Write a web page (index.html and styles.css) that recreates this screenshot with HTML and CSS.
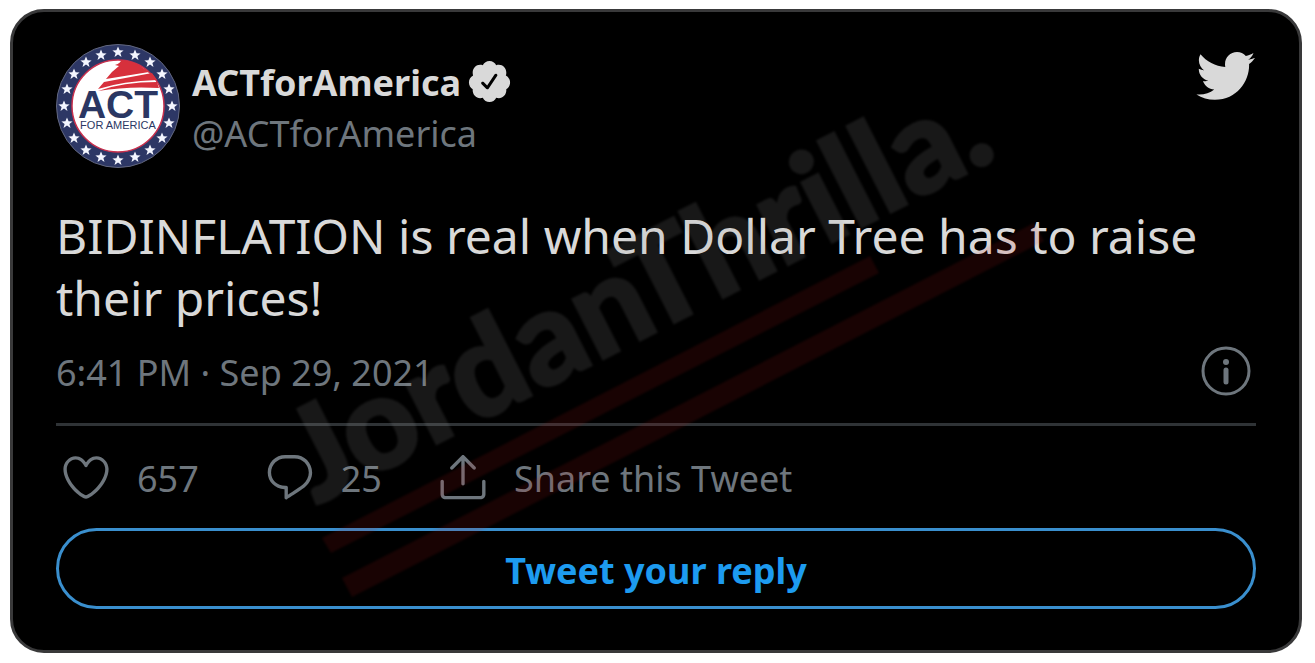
FILE: index.html
```html
<!DOCTYPE html>
<html lang="en">
<head>
  <meta charset="utf-8">
  <title>ACTforAmerica on Twitter</title>
  <link rel="stylesheet" href="styles.css">
</head>
<body>
<article class="tweet">
  <header class="tweet-header">
    <svg class="avatar" viewBox="-62 -62 124 124" role="img" aria-label="ACT for America">
      <defs>
        <path id="star" d="M0-5.6L1.6-1.8 5.6-1.6 2.4.9 3.5 4.9 0 2.6-3.5 4.9-2.4.9-5.6-1.6-1.6-1.8z"/>
      </defs>
      <circle r="61.5" fill="#2d3765" stroke="#62677f"/>
      <circle r="46" fill="#fff" stroke="#c9304d" stroke-width="1.5"/>
      <g fill="#d7303c">
        <path d="M3-46Q17-45 25-38L31-34-12-27Q-6-35 1-40L-3-41Q3-43 3-46z"/>
        <path d="M-14-24L34-33 39-26Q5-25-20-17z"/>
        <path d="M39-24L41-18Q10-20-20-15 5-24 39-24z"/>
      </g>
      <g fill="#f4f6ff">
        <use href="#star" x="0" y="-54"/>
        <use href="#star" x="17" y="-51"/>
        <use href="#star" x="32" y="-44"/>
        <use href="#star" x="44" y="-32"/>
        <use href="#star" x="51" y="-17"/>
        <use href="#star" x="54" y="0"/>
        <use href="#star" x="51" y="17"/>
        <use href="#star" x="44" y="32"/>
        <use href="#star" x="32" y="44"/>
        <use href="#star" x="17" y="51"/>
        <use href="#star" x="0" y="54"/>
        <use href="#star" x="-17" y="51"/>
        <use href="#star" x="-32" y="44"/>
        <use href="#star" x="-44" y="32"/>
        <use href="#star" x="-51" y="17"/>
        <use href="#star" x="-54" y="0"/>
        <use href="#star" x="-51" y="-17"/>
        <use href="#star" x="-44" y="-32"/>
        <use href="#star" x="-32" y="-44"/>
        <use href="#star" x="-17" y="-51"/>
      </g>
      <text class="logo-act" x="0" y="12">ACT</text>
      <text class="logo-sub" x="0" y="23">FOR AMERICA</text>
    </svg>
    <div class="author">
      <div class="name-row">
        <span class="name">ACTforAmerica</span>
        <svg class="badge" viewBox="0 0 24 24" role="img" aria-label="Verified account"><path d="M22.5 12.5c0-1.58-.875-2.95-2.148-3.6.154-.435.238-.905.238-1.4 0-2.21-1.71-3.998-3.818-3.998-.47 0-.92.084-1.336.25C14.818 2.415 13.51 1.5 12 1.5s-2.816.917-3.437 2.25c-.415-.165-.866-.25-1.336-.25-2.11 0-3.818 1.79-3.818 4 0 .494.083.964.237 1.4-1.272.65-2.147 2.018-2.147 3.6 0 1.495.782 2.798 1.942 3.486-.02.17-.032.34-.032.514 0 2.21 1.708 4 3.818 4 .47 0 .92-.086 1.335-.25.62 1.334 1.926 2.25 3.437 2.25 1.512 0 2.818-.916 3.437-2.25.415.163.865.248 1.336.248 2.11 0 3.818-1.79 3.818-4 0-.174-.012-.344-.033-.513 1.158-.687 1.943-1.99 1.943-3.484zm-6.616-3.334l-4.334 6.5c-.145.217-.382.334-.625.334-.143 0-.288-.04-.416-.126l-.115-.094-2.415-2.415c-.293-.293-.293-.768 0-1.06s.768-.294 1.06 0l1.77 1.767 3.825-5.74c.23-.345.696-.436 1.04-.207.346.23.44.696.21 1.04z"/></svg>
      </div>
      <div class="handle">@ACTforAmerica</div>
    </div>
    <svg class="bird" viewBox="0 0 24 24" role="img" aria-label="Twitter"><path d="M23.643 4.937c-.835.37-1.732.62-2.675.733.962-.576 1.7-1.49 2.048-2.578-.9.534-1.897.922-2.958 1.13-.85-.904-2.06-1.47-3.4-1.47-2.572 0-4.658 2.086-4.658 4.66 0 .364.042.718.12 1.06-3.873-.195-7.304-2.05-9.602-4.868-.4.69-.63 1.49-.63 2.342 0 1.616.823 3.043 2.072 3.878-.764-.025-1.482-.234-2.11-.583v.06c0 2.257 1.605 4.14 3.737 4.568-.392.106-.803.162-1.227.162-.3 0-.593-.028-.877-.082.593 1.85 2.313 3.198 4.352 3.234-1.595 1.25-3.604 1.995-5.786 1.995-.376 0-.747-.022-1.112-.065 2.062 1.323 4.51 2.093 7.14 2.093 8.57 0 13.255-7.098 13.255-13.254 0-.2-.005-.402-.014-.602.91-.658 1.7-1.477 2.323-2.41z"/></svg>
  </header>

  <p class="tweet-text">BIDINFLATION is real when Dollar Tree has to raise their prices!</p>

  <div class="meta">
    <time datetime="2021-09-29T18:41">6:41 PM · Sep 29, 2021</time>
    <svg class="info" viewBox="0 0 50 50" role="img" aria-label="Info">
      <circle cx="25" cy="25" r="23" fill="none" stroke="currentColor" stroke-width="3"/>
      <circle cx="25" cy="16" r="3" fill="currentColor"/>
      <path d="M25 24V36" stroke="currentColor" stroke-width="5" stroke-linecap="round"/>
    </svg>
  </div>

  <div class="actions">
    <button class="action like" type="button">
      <svg class="icon" viewBox="0 0 24 24" aria-hidden="true"><path d="M12 21.638h-.014C9.403 21.59 1.95 14.856 1.95 8.478c0-3.064 2.525-5.754 5.403-5.754 2.29 0 3.83 1.58 4.646 2.73.814-1.148 2.354-2.73 4.645-2.73 2.88 0 5.404 2.69 5.404 5.755 0 6.376-7.454 13.11-10.037 13.157H12zM7.354 4.225c-2.08 0-3.903 1.988-3.903 4.255 0 5.74 7.034 11.596 8.55 11.658 1.518-.062 8.55-5.917 8.55-11.658 0-2.267-1.823-4.255-3.903-4.255-2.528 0-3.94 2.936-3.952 2.965-.23.562-1.156.562-1.387 0-.014-.03-1.425-2.965-3.954-2.965z"/></svg>
      <span>657</span>
    </button>
    <button class="action" type="button">
      <svg class="icon" viewBox="0 0 24 24" aria-hidden="true"><path d="M14.046 2.242l-4.148-.01h-.002c-4.374 0-7.8 3.427-7.8 7.802 0 4.098 3.186 7.206 7.465 7.37v3.828c0 .108.044.286.12.403.142.225.384.347.632.347.138 0 .277-.038.402-.118.264-.168 6.473-4.14 8.088-5.506 1.902-1.61 3.04-3.97 3.043-6.312v-.017c-.006-4.367-3.43-7.787-7.8-7.788zm3.787 12.972c-1.134.96-4.862 3.405-6.772 4.643V16.67c0-.414-.335-.75-.75-.75h-.396c-3.66 0-6.318-2.476-6.318-5.886 0-3.534 2.768-6.302 6.3-6.302l4.147.01h.002c3.532 0 6.3 2.766 6.302 6.296-.003 1.91-.942 3.844-2.514 5.176z"/></svg>
      <span>25</span>
    </button>
    <button class="action" type="button">
      <svg class="icon" viewBox="0 0 24 24" aria-hidden="true"><path d="M17.53 7.47l-5-5c-.293-.293-.768-.293-1.06 0l-5 5c-.294.293-.294.768 0 1.06s.767.294 1.06 0l3.72-3.72V15c0 .414.336.75.75.75s.75-.336.75-.75V4.81l3.72 3.72c.146.147.338.22.53.22s.384-.072.53-.22c.293-.293.293-.767 0-1.06z"/><path d="M19.708 21.944H4.292C3.028 21.944 2 20.916 2 19.652V14c0-.414.336-.75.75-.75s.75.336.75.75v5.652c0 .437.355.792.792.792h15.416c.437 0 .792-.355.792-.792V14c0-.414.336-.75.75-.75s.75.336.75.75v5.652c0 1.264-1.028 2.292-2.292 2.292z"/></svg>
      <span>Share this Tweet</span>
    </button>
  </div>

  <button class="reply" type="button">Tweet your reply</button>

  <!-- site watermark, lies over the whole card -->
  <svg class="watermark" viewBox="13 12 1286 638">
    <text transform="translate(316 505) rotate(-27)">JordanThrilla.</text>
    <path d="M322 538L870 256 879 273 331 553z"/>
    <path d="M342 578L1034 223 1044 241 352 597z"/>
  </svg>
</article>
</body>
</html>
```
FILE: styles.css
```css
* {
  box-sizing: border-box;
}

body {
  margin: 0;
  padding: 9px 13px 10px 10px;
  background-color: #fff;
  font-family: "Noto Sans", "Open Sans", sans-serif;
}

.tweet {
  position: relative;
  padding: 32px 43px 41px;
  background-color: #000;
  border: 3px solid #39393a;
  border-radius: 34px;
  overflow: hidden;
  color: #d9d9d9;
}

.tweet-header {
  display: flex;
  align-items: flex-start;
}

.avatar {
  width: 124px;
  height: 124px;
}

.logo-act,
.logo-sub {
  font-family: "Liberation Sans", Arial, sans-serif;
  text-anchor: middle;
  fill: #2b3763;
}

.logo-act {
  font-size: 39px;
  font-weight: bold;
}

.logo-sub {
  font-size: 11px;
}

.author {
  flex: 1;
  padding: 12px 0 0 12px;
}

.name-row {
  display: flex;
  align-items: center;
  gap: 5px;
  height: 52px;
}

.name {
  font-size: 36px;
  font-weight: 700;
}

.badge {
  width: 47px;
  height: 47px;
  margin-top: -2px;
  fill: #d9d9d9;
}

.handle {
  font-size: 36px;
  line-height: 52px;
  color: #6e767d;
}

.bird {
  width: 62px;
  height: 64px;
  fill: #d9d9d9;
}

.tweet-text {
  margin: 37px 0 0;
  font-size: 48px;
  line-height: 62px;
}

.meta {
  display: flex;
  justify-content: space-between;
  align-items: center;
  margin-top: 16px;
  padding: 0 5px 22px 0;
  border-bottom: 3px solid #2f3336;
  font-size: 36px;
  line-height: 56px;
  color: #6e767d;
}

.info {
  width: 50px;
  height: 50px;
  margin-bottom: 4px;
}

.actions {
  display: flex;
  gap: 54px;
  margin: 24px 0 24px 3px;
}

.action {
  display: flex;
  align-items: center;
  gap: 24px;
  height: 54px;
  padding: 0;
  border: 0;
  background: none;
  font: inherit;
  font-size: 36px;
  line-height: 50px;
  color: #6e767d;
  cursor: pointer;
}

.action span {
  padding-top: 4px;
}

.like {
  margin-right: 10px;
}

.icon {
  width: 54px;
  height: 54px;
  fill: currentColor;
}

.reply {
  display: block;
  width: 100%;
  height: 81px;
  padding: 4px 0 0;
  border: 3px solid #3a8fce;
  border-radius: 41px;
  background: none;
  font: inherit;
  font-size: 36px;
  font-weight: 700;
  color: #1d9bf0;
  cursor: pointer;
}

.watermark {
  position: absolute;
  inset: 0;
  width: 100%;
  height: 100%;
  filter: blur(1px);
  pointer-events: none;
}

.watermark text {
  font-family: Lato, sans-serif;
  font-size: 129px;
  font-weight: 900;
  fill: #a0a0a0;
  stroke: #a0a0a0;
  stroke-width: 3px;
  opacity: 0.15;
}

.watermark path {
  fill: #be1414;
  opacity: 0.13;
}
```
